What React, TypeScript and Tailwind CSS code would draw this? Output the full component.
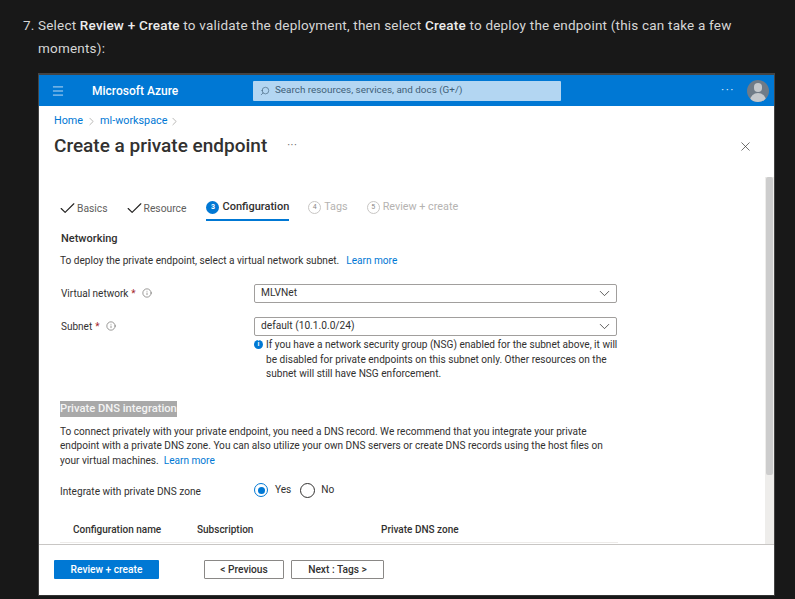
import { ChevronDown, X, Info, Check, Search, Menu, ChevronRight } from 'lucide-react'

function Field({ label, value, h, gap }: { label: string; value: string; h: string; gap: string }) {
  return (
    <div className={`flex items-center ${h}`}>
      <div className="flex w-[194px] items-center pl-[1px] text-[10px] text-[#323130]">
        {label}
        <span className="ml-[3px] text-[#a4262c]">*</span>
        <Info className={`${gap} h-[10px] w-[10px] text-[#605e5c]`} strokeWidth={1.5} />
      </div>
      <div className="flex h-[19px] w-[363px] items-center justify-between rounded-[2px] border border-[#a19f9d] pl-[6px] pr-[3px] text-[10.2px] text-[#323130]">
        {value}
        <ChevronDown className="h-[17px] w-[17px] text-[#323130]" strokeWidth={1.1} />
      </div>
    </div>
  )
}

function DoneTab({ label }: { label: string }) {
  return (
    <div className="flex items-center text-[10.3px] text-[#605e5c]">
      <Check className="-ml-[2px] h-[19px] w-[19px] text-[#201f1e]" strokeWidth={1.4} />
      {label}
    </div>
  )
}

function TodoTab({ n, label }: { n: number; label: string }) {
  return (
    <div className="flex items-center text-[10.8px] text-[#b5b3b1]">
      <span className="mr-[3px] flex h-[13px] w-[13px] items-center justify-center rounded-full border border-[#c8c6c4] text-[7px] text-[#8a8886]">
        {n}
      </span>
      {label}
    </div>
  )
}

export default function App() {
  return (
    <div className="h-[599px] w-[795px] overflow-hidden bg-[#181818] font-['Roboto',sans-serif]">
      {/* Step text */}
      <div className="flex pl-[23px] pt-[14px] text-[13.5px] leading-[23px] tracking-[0.2px] text-[#d6d6d6]">
        <span className="w-[15px] shrink-0">7.</span>
        <p className="w-[720px]">
          Select <b className="font-medium text-[#ececec]">Review + Create</b> to validate the deployment, then select{' '}
          <b className="font-medium text-[#ececec]">Create</b> to deploy the endpoint (this can take a few moments):
        </p>
      </div>

      {/* Portal screenshot */}
      <div className="ml-[38px] mt-[13px] flex h-[523px] w-[737px] flex-col border-x border-t-2 border-b border-x-[#444] border-t-[#444] border-b-[#333] bg-white">
        <div className="flex h-[31px] shrink-0 items-center bg-[#0078d4] text-white">
          <Menu className="ml-[12px] h-[14px] w-[14px] text-[#d5e7f7]" strokeWidth={1.5} />
          <span className="ml-[27px] w-[161px] text-[12px] font-medium">Microsoft Azure</span>
          <div className="flex h-[20px] w-[308px] items-center rounded-[1px] bg-[#b3d6f2] pl-[7px] text-[9.9px] text-[#3f5f78]">
            <Search className="mr-[5px] h-[10px] w-[10px] -scale-x-100 text-[#3f5f78]" strokeWidth={1.5} />
            Search resources, services, and docs (G+/)
          </div>
          <span className="ml-auto mr-[12px] mb-[2px] text-[12px] leading-none tracking-[1.5px] text-[#d5e7f7]">···</span>
          <div className="relative mr-[5px] h-[22px] w-[22px] overflow-hidden rounded-full bg-[#6f7b87]">
            <div className="absolute left-[7px] top-[3px] h-[9px] w-[8px] rounded-full bg-[#c4c8cc]" />
            <div className="absolute left-[3px] top-[13px] h-[10px] w-[16px] rounded-t-full bg-[#c4c8cc]" />
          </div>
        </div>

        <div className="flex shrink-0 flex-col pl-[15px] pr-[21px]">
          <div className="flex h-[29px] items-center pt-[1px] text-[10.8px] text-[#0078d4]">
            Home
            <ChevronRight className="mx-[2px] h-[13px] w-[13px] text-[#8a8886]" strokeWidth={1.1} />
            ml-workspace
            <ChevronRight className="ml-[1px] h-[13px] w-[13px] text-[#8a8886]" strokeWidth={1.1} />
          </div>
          <div className="flex h-[22px] items-center pt-[1px] text-[#323130]">
            <span className="text-[19px] font-medium">Create a private endpoint</span>
            <span className="ml-[20px] text-[11px] tracking-[0.5px] text-[#605e5c]">···</span>
            <X className="ml-auto h-[15px] w-[15px]" strokeWidth={1.1} />
          </div>
        </div>

        <div className="flex min-h-0 flex-1 pt-[20px]">
          <div className="min-h-0 flex-1 overflow-hidden pl-[21px] pt-[20px]">
            {/* Tabs */}
            <div className="flex h-[31px] items-start gap-[19px] pt-[2px]">
              <DoneTab label="Basics" />
              <DoneTab label="Resource" />
              <div className="-mt-[2px] ml-[1px] flex h-[24px] items-center border-b-2 border-[#0078d4] pb-[2px] text-[11px] font-medium text-[#323130]">
                <span className="mr-[3px] flex h-[13px] w-[13px] items-center justify-center rounded-full bg-[#0078d4] text-[7px] font-bold text-white">
                  3
                </span>
                Configuration
              </div>
              <TodoTab n={4} label="Tags" />
              <TodoTab n={5} label="Review + create" />
            </div>

            <div className="flex h-[22px] items-center pl-[1px] text-[11px] font-medium text-[#323130]">Networking</div>
            <div className="flex h-[22px] items-center text-[10.1px] text-[#323130]">
              To deploy the private endpoint, select a virtual network subnet.
              <span className="ml-[7px] text-[#0078d4]">Learn more</span>
            </div>
            <Field label="Virtual network" value="MLVNet" h="mt-[10px] h-[22px]" gap="ml-[6px]" />
            <Field label="Subnet" value="default (10.1.0.0/24)" h="mt-[11px] h-[22px]" gap="ml-[7px]" />

            <div className="ml-[194px] mt-[1px] flex w-[364px] text-[10.1px] leading-[14.5px] text-[#323130]">
              <span className="mr-[3px] mt-[2px] flex h-[9px] w-[9px] shrink-0 items-center justify-center rounded-full bg-[#0078d4] text-[7px] font-bold text-white">
                i
              </span>
              <p className="w-[352px]">
                If you have a network security group (NSG) enabled for the subnet above, it will be disabled for private endpoints on this subnet only. Other resources on the subnet will still have NSG enforcement.
              </p>
            </div>

            <div className="mt-[19px] w-fit bg-[#a9a9a9] text-[11.2px] font-medium leading-[16px] text-[#f4f4f4]">Private DNS integration</div>
            <p className="mt-[8px] w-[560px] text-[10.1px] leading-[14.5px] text-[#323130]">
              To connect privately with your private endpoint, you need a DNS record. We recommend that you integrate your private endpoint with a private DNS zone. You can also utilize your own DNS servers or create DNS records using the host files on your virtual machines.
              <span className="ml-[5px] text-[#0078d4]">Learn more</span>
            </p>

            <div className="mt-[10px] flex h-[24px] items-center text-[10.1px] text-[#323130]">
              <span className="w-[194px] pt-[3px]">Integrate with private DNS zone</span>
              <span className="flex h-[14px] w-[14px] items-center justify-center rounded-full border border-[#0078d4]">
                <span className="h-[7px] w-[7px] rounded-full bg-[#0078d4]" />
              </span>
              <span className="ml-[7px]">Yes</span>
              <span className="ml-[9px] h-[15px] w-[15px] rounded-full border border-[#323130]" />
              <span className="ml-[6px]">No</span>
            </div>

            <div className="mt-[15px] flex h-[26px] w-[558px] items-center border-b border-[#edebe9] pl-[13px] text-[10px] font-medium text-[#323130]">
              <span className="w-[124px]">Configuration name</span>
              <span className="w-[184px]">Subscription</span>
              <span>Private DNS zone</span>
            </div>
          </div>

          <div className="w-[9px] shrink-0 bg-[#eeedeb] pl-[1px]">
            <div className="h-[298px] w-[7px] rounded-[2px] bg-[#cdcdcd]" />
          </div>
        </div>

        <div className="flex h-[51px] shrink-0 items-center border-t border-[#c8c6c4] pb-[1px] pl-[15px]">
          <div className="flex h-[19px] w-[105px] items-center justify-center rounded-[1px] bg-[#0078d4] text-[10.2px] font-medium text-white">Review + create</div>
          <div className="ml-[45px] flex h-[19px] w-[80px] items-center justify-center rounded-[1px] border border-[#8a8886] text-[10.2px] font-medium text-[#323130]">&lt; Previous</div>
          <div className="ml-[7px] flex h-[19px] w-[93px] items-center justify-center rounded-[1px] border border-[#8a8886] text-[10.2px] font-medium text-[#323130]">Next : Tags &gt;</div>
        </div>
      </div>
    </div>
  )
}
